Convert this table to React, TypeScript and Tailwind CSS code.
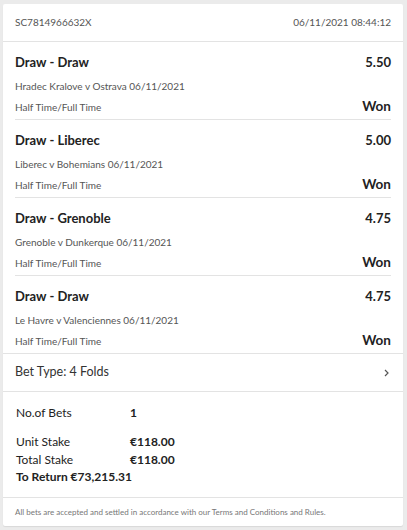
const legs = [
  { title: "Draw - Draw", odds: "5.50", match: "Hradec Kralove v Ostrava 06/11/2021" },
  { title: "Draw - Liberec", odds: "5.00", match: "Liberec v Bohemians 06/11/2021" },
  { title: "Draw - Grenoble", odds: "4.75", match: "Grenoble v Dunkerque 06/11/2021" },
  { title: "Draw - Draw", odds: "4.75", match: "Le Havre v Valenciennes 06/11/2021" },
];

const App = () => {
  return (
    <div
      className="min-h-[530px] bg-[#ebebeb] pt-[4px] pl-[3px] pr-[4px] pb-[4px]"
      style={{ fontFamily: 'Lato, "Open Sans", sans-serif' }}
    >
      <div className="bg-white rounded-[2px] shadow-[0_1px_1px_rgba(0,0,0,0.08)]">
        {/* Header */}
        <div className="flex items-center justify-between h-[38px] px-[12px] border-b border-[#e3e3e3] text-[10px] text-[#555]">
          <span>SC7814966632X</span>
          <span>06/11/2021 08:44:12</span>
        </div>

        {/* Legs */}
        <div className="px-[12px]">
          {legs.map((leg, i) => (
            <div
              key={i}
              className={`pt-[11px] pb-[3px] ${i < legs.length - 1 ? "border-b border-[#e3e3e3]" : ""}`}
            >
              <div className="flex items-center justify-between h-[20px] text-[13px] font-bold text-[#222]">
                <span>{leg.title}</span>
                <span>{leg.odds}</span>
              </div>
              <div className="h-[20px] flex items-center text-[10px] text-[#555] mt-[3px]">{leg.match}</div>
              <div className="flex items-baseline justify-between h-[20px] pt-[2px] leading-[16px]">
                <span className="text-[10px] text-[#555]">Half Time/Full Time</span>
                <span className="text-[13.5px] font-bold text-[#222]">Won</span>
              </div>
            </div>
          ))}
        </div>

        {/* Bet type */}
        <div className="flex items-center justify-between h-[39px] px-[12px] border-t border-b border-[#e3e3e3]">
          <span className="text-[12.5px] text-[#333]">Bet Type: 4 Folds</span>
          <svg width="6" height="8" viewBox="0 0 6 8" className="mr-[1px]">
            <path d="M1 1l3 3-3 3" fill="none" stroke="#555" strokeWidth="1.2" />
          </svg>
        </div>

        {/* Summary */}
        <div className="px-[13px] pt-[12px] pb-[11px] text-[12px] text-[#222]">
          <div className="flex h-[18px] items-center">
            <span className="w-[114px]">No.of Bets</span>
            <span className="font-bold">1</span>
          </div>
          <div className="flex h-[18px] items-center mt-[11px]">
            <span className="w-[114px]">Unit Stake</span>
            <span className="font-bold">€118.00</span>
          </div>
          <div className="flex h-[17px] items-center">
            <span className="w-[114px]">Total Stake</span>
            <span className="font-bold">€118.00</span>
          </div>
          <div className="flex h-[18px] items-center font-bold">To Return €73,215.31</div>
        </div>

        {/* Footer */}
        <div className="border-t border-[#e3e3e3] h-[29px] flex items-center px-[12px] text-[8px] text-[#777]">
          All bets are accepted and settled in accordance with our Terms and Conditions and Rules.
        </div>
      </div>
    </div>
  );
};

export default App;
